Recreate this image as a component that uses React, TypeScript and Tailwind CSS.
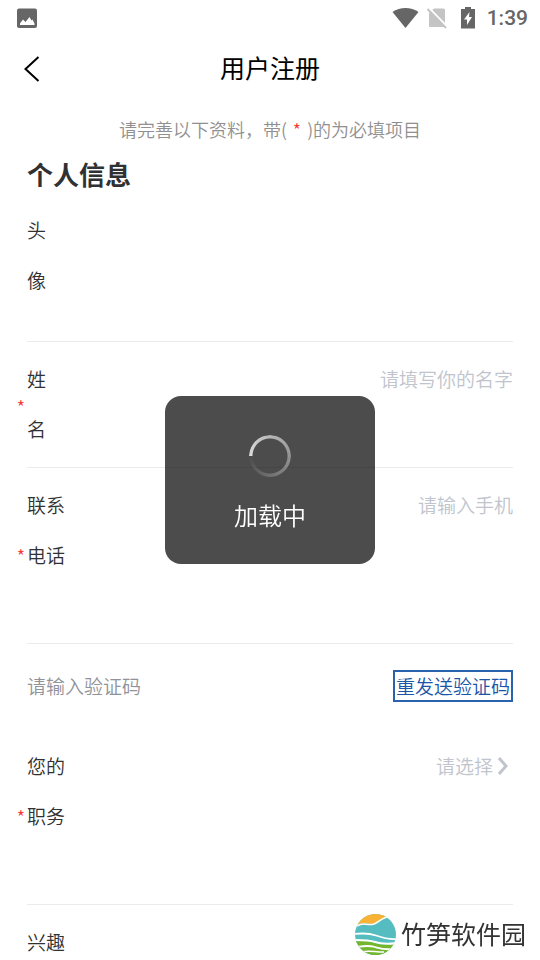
import type { ReactNode } from 'react';

const fieldClass =
  'h-12 min-w-0 flex-1 text-right text-[19px] outline-none placeholder:text-[#c0c4cc] placeholder:opacity-100';

function FormRow({
  id,
  lines,
  required = false,
  className = 'pb-[13px]',
  children,
}: {
  id: string;
  lines: string[];
  required?: boolean;
  className?: string;
  children?: ReactNode;
}) {
  return (
    <div className={`flex border-b border-[#ebebeb] pt-3 ${className}`}>
      <div className="relative w-20 shrink-0">
        {required && (
          <span className="absolute inset-y-0 right-full flex items-center pt-1 pr-0.5 text-[18px] text-[#fa3534]">
            *
          </span>
        )}
        <label htmlFor={id} className="block text-[19px] leading-[50px] text-[#303133]">
          {lines.map((line) => (
            <span key={line} className="block">
              {line}
            </span>
          ))}
        </label>
      </div>
      {children}
    </div>
  );
}

function StatusBar() {
  return (
    <div className="flex h-9 shrink-0 items-center justify-between pr-3 pl-4 text-[#666]">
      <svg className="size-[22px]" viewBox="0 0 22 22">
        <rect x="1" y="1.500" width="20" height="19.500" rx="2" fill="currentColor" />
        <path d="M4 18v-1.500l3-4 2.500 2.500 4-5 2 3.500 1-1L18.500 16.500V18z" fill="#fff" />
      </svg>
      <div className="flex items-center">
        <svg className="h-[22px] w-[27px]" viewBox="0 0 27 22">
          <path d="M0.500 5C8-0.500 19-0.500 26.500 5L13.500 21z" fill="currentColor" />
        </svg>
        <svg className="ml-2 h-[22px] w-5" viewBox="0 0 20 22">
          <path d="M7 1.500h9.500q1.500 0 1.500 1.500V19q0 1-1 1H3q-1 0-1-1V6z" fill="#c4c4c4" />
          <path d="M2 1l18 18.500" stroke="#fff" strokeWidth="2" />
          <path d="M0.500 2l18.500 19" stroke="#c4c4c4" strokeWidth="2" />
        </svg>
        <svg className="ml-[13px] h-[22px] w-4" viewBox="0 0 16 22">
          <path d="M5 0h6v2h4v19.500H1V2h4z" fill="currentColor" />
          <path d="M9.500 5L4 12.500h3V18l5-8H9z" fill="#fff" />
        </svg>
        <span className="ml-[11px] font-[Roboto,sans-serif] text-[21px] leading-6 font-medium">1:39</span>
      </div>
    </div>
  );
}

function LoadingToast() {
  return (
    <div
      role="status"
      className="fixed top-1/2 left-1/2 flex h-42 w-[210px] -translate-x-1/2 -translate-y-1/2 flex-col items-center rounded-2xl bg-black/70 pt-[39px] text-white"
    >
      <div className="size-[42px] rounded-full bg-[conic-gradient(from_270deg,#ffffffcc,#ffffff00)] [mask:radial-gradient(circle,transparent_17px,#000_18px)]" />
      <p className="mt-5 text-[24px] leading-9 font-[350]">加载中</p>
    </div>
  );
}

function Watermark() {
  return (
    <div className="fixed right-3.5 bottom-1 flex items-center gap-1 text-[#333]">
      <svg className="size-[43px]" viewBox="0 0 43 43">
        <clipPath id="disc">
          <circle cx="21.500" cy="21.500" r="20.500" />
        </clipPath>
        <g clipPath="url(#disc)">
          <path d="M0 0h43v43H0z" fill="#55bdc0" />
          <path d="M0 0h34v3c-6 2-9 8-16 8S10 9 4 12z" fill="#f9b233" />
          <path d="M0 28c10 0 15 0 21 2s14 2 22 0v13H0z" fill="#74b72e" />
          <path d="M3 13c6-4 9-1 15-1.500S27 4 35 4" fill="none" stroke="#fff" strokeWidth="1.600" />
          <path d="M0 21c9-1 15-1 22 1.500s14 4 21 3.500" fill="none" stroke="#fff" strokeWidth="1.800" />
          <path d="M0 27c9 0 15 0 21 2s14 2 22 1" fill="none" stroke="#fff" strokeWidth="2" />
          <path d="M2 34c8-1 12-2 19 0s10 3 17 2" fill="none" stroke="#fff" strokeWidth="1.800" />
          <path d="M8 39c6-2 12 0 22 0" fill="none" stroke="#fff" strokeWidth="1.600" />
        </g>
      </svg>
      <span className="pb-1 text-[25px] leading-9">竹笋软件园</span>
    </div>
  );
}

export default function App() {
  return (
    <div className="flex h-screen flex-col overflow-hidden bg-white font-['Noto_Sans_CJK_SC',sans-serif]">
      <StatusBar />
      <header className="grid h-16 shrink-0 grid-cols-[64px_1fr_64px] items-center">
        <button type="button" aria-label="返回" className="flex h-full items-center pt-0.5 pl-6">
          <svg className="h-[26px] w-4" viewBox="0 0 16 26" fill="none" stroke="#000" strokeWidth="2">
            <path d="M14.500 1L1.500 13l13 12" />
          </svg>
        </button>
        <h1 className="text-center text-[25px] text-black">用户注册</h1>
      </header>

      <main className="grow overflow-y-auto px-[27px] pt-[15px] font-[350] [scrollbar-width:none]">
        <p className="text-center text-[18px] leading-7 text-[#909090]">
          请完善以下资料，带(<span className="px-1.5 text-[#fa3534]">*</span>)的为必填项目
        </p>
        <h2 className="mt-3 text-[26px] leading-[38px] font-bold text-[#303133]">个人信息</h2>

        <form>
          <FormRow id="avatar" lines={['头', '像']} className="pb-9" />
          <FormRow id="name" lines={['姓', '名']} required>
            <input id="name" placeholder="请填写你的名字" className={fieldClass} />
          </FormRow>
          <FormRow id="phone" lines={['联系', '电话']} required className="h-44 pb-4">
            <input id="phone" type="tel" placeholder="请输入手机" className={fieldClass} />
          </FormRow>
          <div className="flex h-[85px] items-center justify-between pb-0.5">
            <input
              aria-label="验证码"
              placeholder="请输入验证码"
              className="h-12 min-w-0 flex-1 text-[19px] outline-none placeholder:text-[#909399] placeholder:opacity-100"
            />
            <button type="button" className="h-8 border-2 border-[#2b62ae] px-px text-[19px] leading-7 text-[#1a56a8]">
              重发送验证码
            </button>
          </div>
          <FormRow id="job" lines={['您的', '职务']} required className="h-44 pb-4">
            <button
              id="job"
              type="button"
              className="flex h-[50px] flex-1 items-center justify-end gap-1 pr-1 text-[19px] text-[#c0c4cc]"
            >
              请选择
              <svg className="h-5 w-3" viewBox="0 0 12 20" fill="none" stroke="currentColor" strokeWidth="3">
                <path d="M2 2l7 8-7 8" />
              </svg>
            </button>
          </FormRow>
          <FormRow id="hobby" lines={['兴趣']}>
            <input id="hobby" className={fieldClass} />
          </FormRow>
        </form>
      </main>

      <LoadingToast />
      <Watermark />
    </div>
  );
}
